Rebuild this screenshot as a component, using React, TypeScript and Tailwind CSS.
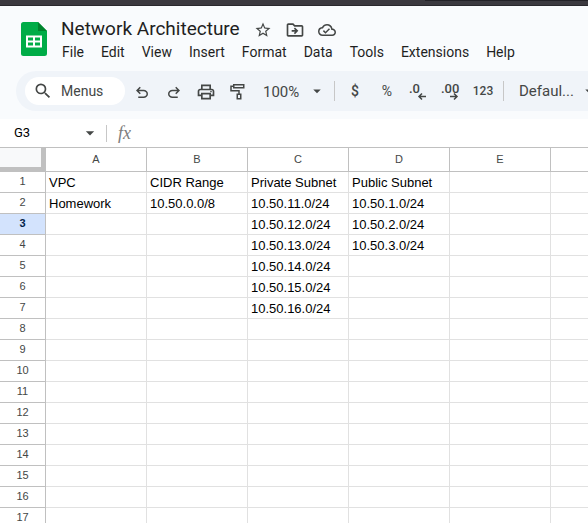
import type { ReactNode } from 'react';
import { MdStarBorder, MdOutlineDriveFileMove, MdOutlineCloudDone, MdSearch, MdOutlinePrint, MdArrowDropDown } from 'react-icons/md';

const menus = ['File', 'Edit', 'View', 'Insert', 'Format', 'Data', 'Tools', 'Extensions', 'Help'];
const columns = ['A', 'B', 'C', 'D', 'E'];
const data: string[][] = [
  ['VPC', 'CIDR Range', 'Private Subnet', 'Public Subnet'],
  ['Homework', '10.50.0.0/8', '10.50.11.0/24', '10.50.1.0/24'],
  ['', '', '10.50.12.0/24', '10.50.2.0/24'],
  ['', '', '10.50.13.0/24', '10.50.3.0/24'],
  ['', '', '10.50.14.0/24'],
  ['', '', '10.50.15.0/24'],
  ['', '', '10.50.16.0/24'],
];
const rowNumbers = Array.from({ length: 17 }, (_, i) => i + 1);
const selectedRow = 3;

function SheetsLogo() {
  return (
    <svg viewBox="0 0 26 34" className="h-[34px] w-[26px] shrink-0" aria-label="Sheets">
      <path d="M2.5 0H17l9 9v22.5a2.5 2.5 0 0 1-2.5 2.5h-21A2.5 2.5 0 0 1 0 31.5V2.5A2.5 2.5 0 0 1 2.5 0z" fill="#00ac47" />
      <path d="M17 0l9 9h-9z" fill="#00832d" />
      <path d="M5 13.5h16v12H5z" fill="#fff" />
      <path d="M7 15.5h5v3H7zM14 15.5h5v3h-5zM7 20.5h5v3H7zM14 20.5h5v3h-5z" fill="#00ac47" />
    </svg>
  );
}

function UndoIcon({ flip = false }: { flip?: boolean }) {
  return (
    <svg viewBox="0 -1 24 24" className={flip ? 'size-[18px] -scale-x-100' : 'size-[18px]'} fill="currentColor">
      <path d="M7 19v-2h7.1q1.575 0 2.738-1T18 13.5T16.838 11T14.1 10H7.8l2.6 2.6L9 14L4 9l5-5l1.4 1.4L7.8 8h6.3q2.425 0 4.163 1.575T20 13.5t-1.737 3.925T14.1 19z" />
    </svg>
  );
}

function RollerIcon() {
  return (
    <svg viewBox="0 0 18 18" className="size-[18px]" fill="none" stroke="currentColor" strokeWidth="1.5">
      <path d="M4.75 1.75h10v3h-10zM4.75 3.25H2v4.5h8v3.5M8.25 11.25h3.5v4.5h-3.5z" />
    </svg>
  );
}

function DecimalIcon({ digits, increase = false }: { digits: string; increase?: boolean }) {
  return (
    <svg viewBox="0 0 18 18" className="size-[18px] overflow-visible" fill="none" stroke="currentColor">
      <text x={-1} y="10" fill="currentColor" stroke="none" className="font-['Roboto',sans-serif] text-[13px] font-medium">
        {digits}
      </text>
      <path d={increase ? 'M8 13.5h7M12 10.5l3 3l-3 3' : 'M16 13.5H9M12 10.5l-3 3l3 3'} strokeWidth="1.5" />
    </svg>
  );
}

function ToolButton({ label, children }: { label: string; children: ReactNode }) {
  return (
    <button type="button" aria-label={label} className="flex h-7 w-8 shrink-0 items-center justify-center">
      {children}
    </button>
  );
}

function IconButton({ label, children }: { label: string; children: ReactNode }) {
  return (
    <button type="button" aria-label={label} className="flex h-7 w-8 shrink-0 items-center justify-center pt-0.5">
      {children}
    </button>
  );
}

function Divider() {
  return <span className="mx-1 h-5 w-px shrink-0 bg-[#c7c7c7]" />;
}

export default function App() {
  return (
    <div className="flex h-screen flex-col overflow-hidden bg-[#f9fbfd] font-['Roboto','Noto_Sans',sans-serif] text-[#1f1f1f]">
      <div className="flex h-1.5 shrink-0 items-start border-b border-[#29282d] bg-[#3b393f]">
        <div className="ml-[425px] h-px flex-1 bg-[#232227]" />
      </div>

      <header className="flex shrink-0 items-end gap-1.5 pt-2 pl-[21px]">
        <div className="pb-1.5"><SheetsLogo /></div>
        <div>
          <div className="flex h-7 items-center pt-1 pl-2">
            <h1 className="pr-[13px] pb-0.5 text-[19px] leading-6">Network Architecture</h1>
            <div className="flex items-center gap-3 text-[#444746]">
              <button type="button" aria-label="Star" className="flex w-5 justify-center"><MdStarBorder size={18} /></button>
              <button type="button" aria-label="Move" className="flex w-5 justify-center"><MdOutlineDriveFileMove size={20} /></button>
              <button type="button" aria-label="Document status" className="flex w-5 justify-center"><MdOutlineCloudDone size={18} /></button>
            </div>
          </div>
          <nav className="flex h-5 items-center gap-[17px] pl-[9px]">
            {menus.map((m) => (
              <button key={m} type="button" className="text-sm leading-5">{m}</button>
            ))}
          </nav>
        </div>
      </header>

      <div className="mt-[9px] mb-2 ml-4 flex h-10 shrink-0 items-center overflow-hidden rounded-l-full bg-[#f0f4f9] pl-[9px] text-[#444746]">
        <label className="mr-px flex h-7 w-[100px] shrink-0 items-center gap-2 rounded-full bg-white pl-2">
          <MdSearch size={20} className="shrink-0" />
          <input aria-label="Menus" placeholder="Menus" className="w-full min-w-0 bg-transparent text-sm outline-none placeholder:text-[#444746]" />
        </label>
        <IconButton label="Undo"><UndoIcon /></IconButton>
        <IconButton label="Redo"><UndoIcon flip /></IconButton>
        <IconButton label="Print"><MdOutlinePrint size={20} /></IconButton>
        <IconButton label="Paint format"><RollerIcon /></IconButton>
        <div className="relative shrink-0">
          <select aria-label="Zoom" className="h-7 w-19 appearance-none bg-transparent pt-0.5 pl-[9px] text-[15px] outline-none">
            <option>100%</option>
          </select>
          <MdArrowDropDown size={18} className="pointer-events-none absolute top-[5px] right-1" />
        </div>
        <Divider />
        <ToolButton label="Currency"><span className="text-sm font-medium">$</span></ToolButton>
        <ToolButton label="Percent"><span className="text-sm">%</span></ToolButton>
        <IconButton label="Decrease decimal places"><DecimalIcon digits=".0" /></IconButton>
        <IconButton label="Increase decimal places"><DecimalIcon digits=".00" increase /></IconButton>
        <ToolButton label="More formats"><span className="text-xs font-medium">123</span></ToolButton>
        <Divider />
        <button type="button" aria-label="Font" className="flex shrink-0 items-center gap-1.5 pl-[11px] text-[15px]">
          Defaul...
          <MdArrowDropDown size={18} />
        </button>
      </div>

      <div className="flex h-7 shrink-0 items-center bg-white">
        <input aria-label="Name box" defaultValue="G3" className="w-20 bg-transparent pl-3.5 text-[13px] text-black outline-none" />
        <button type="button" aria-label="Named ranges" className="text-[#444746]"><MdArrowDropDown size={20} /></button>
        <span className="ml-1.5 h-[17px] w-px bg-[#c7c7c7]" />
        <span className="pl-[11px] font-['Liberation_Serif',serif] text-lg leading-6 text-[#7d7d7d] italic">fx</span>
      </div>

      <div className="min-h-0 flex-1 overflow-hidden border-t border-[#c0c0c0] bg-white">
        <table className="w-full border-separate border-spacing-0 font-['Liberation_Sans',sans-serif]">
          <thead>
            <tr className="h-6">
              <th className="w-[46px] min-w-[46px] border-r-[5px] border-b-[5px] border-[#c0c0c0] bg-[#f8f9fa] p-0" aria-label="Select all" />
              {columns.map((c) => (
                <th key={c} scope="col" className="w-[101px] min-w-[101px] border-r border-b border-[#c0c0c0] p-0 pb-0.5 text-[11px] leading-4 font-normal text-[#444746]">{c}</th>
              ))}
              <th className="border-b border-[#c0c0c0] p-0" />
            </tr>
          </thead>
          <tbody>
            {rowNumbers.map((n) => (
              <tr key={n} className="h-[21px]">
                <th
                  scope="row"
                  className={
                    n === selectedRow
                      ? 'border-r border-b border-[#c0c0c0] bg-[#d3e3fd] p-0 pb-0.5 text-[11px] leading-4 font-bold text-[#041e49]'
                      : 'border-r border-b border-[#c0c0c0] p-0 pb-0.5 text-[11px] leading-4 font-normal text-[#444746]'
                  }
                >
                  {n}
                </th>
                {columns.map((c, i) => (
                  <td key={c} className="border-r border-b border-[#e1e1e1] p-0 pt-0.5 pl-[3px] text-[13px] leading-4 whitespace-nowrap text-black">
                    {data[n - 1]?.[i] ?? ''}
                  </td>
                ))}
                <td className="border-b border-[#e1e1e1] p-0" />
              </tr>
            ))}
          </tbody>
        </table>
      </div>
    </div>
  );
}
